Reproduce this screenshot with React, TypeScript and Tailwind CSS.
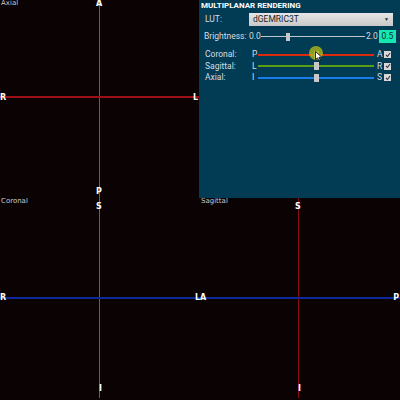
import React from 'react';

type Marker = { text: string; className: string };

interface ViewProps {
  title: string;
  vLineX: number;
  hLineY: number;
  vColor: string;
  hColor: string;
  markers: Marker[];
  className?: string;
}

const View: React.FC<ViewProps> = ({ title, vLineX, hLineY, vColor, hColor, markers, className }) => (
  <div className={`relative overflow-hidden bg-[#0b0204] ${className ?? ''}`}>
    <span className="absolute left-[1px] top-[-1px] text-[7px] leading-[9px] text-[#c8c8c8]">{title}</span>
    <div className={`absolute top-0 bottom-0 w-px ${vColor}`} style={{ left: vLineX }} />
    <div className={`absolute left-0 right-0 h-[2px] ${hColor}`} style={{ top: hLineY }} />
    {markers.map((m, i) => (
      <span key={i} className={`absolute text-[8px] leading-[9px] font-bold text-white ${m.className}`}>
        {m.text}
      </span>
    ))}
  </div>
);

const Check = () => (
  <div className="w-[7px] h-[7px] bg-[#d8d8d8] flex items-center justify-center">
    <svg width="6" height="6" viewBox="0 0 6 6">
      <path d="M1 3 L2.5 4.5 L5 1" stroke="#334" strokeWidth="1.1" fill="none" />
    </svg>
  </div>
);

interface AxisRowProps {
  label: string;
  lo: string;
  hi: string;
  color: string;
}

const AxisRow: React.FC<AxisRowProps> = ({ label, lo, hi, color }) => (
  <div className="flex items-center h-[11.5px]">
    <span className="w-[47px]">{label}</span>
    <span className="w-[6px]">{lo}</span>
    <div className="relative w-[116px] h-[8px] flex items-center">
      <div className={`w-full h-[2px] ${color}`} />
      <div className="absolute left-[56px] top-0 w-[5px] h-[8px] bg-[#c8c8c8]" />
    </div>
    <span className="w-[9px] pl-[3px]">{hi}</span>
    <div className="ml-[1px]">
      <Check />
    </div>
  </div>
);

const Panel = () => (
  <div
    className="relative bg-[#013b54] text-[#d6dde0] text-[8.5px] leading-[9px]"
    style={{ fontFamily: 'Roboto, "Liberation Sans", sans-serif' }}
  >
    <div className="pl-[2px] pt-px font-bold text-white text-[8px]">MULTIPLANAR RENDERING</div>
    <div className="flex items-center mt-[3px] pl-[6px] h-[13px]">
      <span className="w-[44px]">LUT:</span>
      <div className="w-[144px] h-[13px] bg-gradient-to-b from-[#e6e6e6] to-[#c8c8c8] flex items-center justify-between px-[4px] text-[#222]">
        <span>dGEMRIC3T</span>
        <span className="text-[5px]">▼</span>
      </div>
    </div>
    <div className="flex items-center mt-[4px] pl-[5px] h-[13px]">
      <span className="w-[45px]">Brightness:</span>
      <span className="w-[12px]">0.0</span>
      <div className="relative w-[104px] h-[8px] flex items-center">
        <div className="w-full h-px bg-[#c0c8cc]" />
        <div className="absolute left-[25px] top-0 w-[4px] h-[8px] bg-[#c8c8c8]" />
      </div>
      <span className="w-[14px] pl-[1px]">2.0</span>
      <div className="w-[17px] h-[13px] bg-[#14e8b0] text-[#0a2a30] flex items-center justify-center">0.5</div>
    </div>
    <div className="flex flex-col pl-[6px] mt-[6px]">
      <AxisRow label="Coronal:" lo="P" hi="A" color="bg-[#dc2a0c]" />
      <AxisRow label="Sagittal:" lo="L" hi="R" color="bg-[#5c9c12]" />
      <AxisRow label="Axial:" lo="I" hi="S" color="bg-[#1a7ce8]" />
    </div>
    <div className="absolute left-[110px] top-[46px] w-[14px] h-[14px] rounded-full bg-[#b0b818] opacity-80" />
    <svg className="absolute left-[116px] top-[51px]" width="8" height="11" viewBox="0 0 8 11">
      <path d="M0.5 0.5 L0.5 8.5 L2.5 6.8 L4 10 L5.3 9.4 L3.9 6.3 L6.8 6.3 Z" fill="#fff" stroke="#000" strokeWidth="0.8" />
    </svg>
  </div>
);

export default function App() {
  return (
    <div
      className="w-[400px] h-[400px] bg-[#0b0204] grid grid-cols-[199px_201px] grid-rows-[198px_200px] overflow-hidden"
      style={{ fontFamily: '"DejaVu Sans", "Liberation Sans", sans-serif' }}
    >
      <View
        title="Axial"
        vLineX={99}
        hLineY={96}
        vColor="bg-[#2f8a1c]"
        hColor="bg-[#9e0e18]"
        markers={[
          { text: 'A', className: 'left-[96px] top-[-1px]' },
          { text: 'R', className: 'left-0 top-[93px]' },
          { text: 'L', className: 'right-[1px] top-[93px]' },
          { text: 'P', className: 'left-[96px] bottom-[2px]' },
        ]}
      />
      <Panel />
      <div className="col-span-2 grid grid-cols-2">
        <View
          title="Coronal"
          vLineX={99}
          hLineY={99}
          vColor="bg-[#2f8a1c]"
          hColor="bg-[#0e2a9a]"
          markers={[
            { text: 'S', className: 'left-[96px] top-[4px]' },
            { text: 'R', className: 'left-0 top-[95px]' },
            { text: 'L', className: 'right-0 top-[95px]' },
            { text: 'I', className: 'left-[99px] bottom-[5px] text-[#888]' },
          ]}
        />
        <View
          title="Sagittal"
          vLineX={98}
          hLineY={99}
          vColor="bg-[#8c0c16]"
          hColor="bg-[#0e2a9a]"
          markers={[
            { text: 'S', className: 'left-[95px] top-[4px]' },
            { text: 'A', className: 'left-0 top-[95px]' },
            { text: 'P', className: 'right-[1px] top-[95px]' },
            { text: 'I', className: 'left-[98px] bottom-[5px]' },
          ]}
        />
      </div>
    </div>
  );
}
